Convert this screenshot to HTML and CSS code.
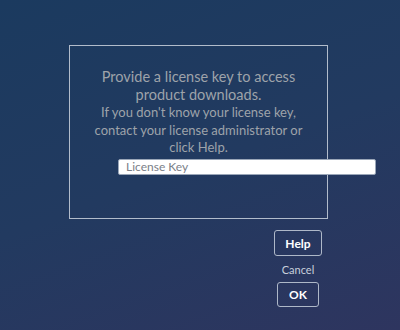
FILE: index.html
```html
<!DOCTYPE html>
<html lang="en">
<head>
  <meta charset="UTF-8" />
  <title>License Key</title>
  <link rel="stylesheet" href="styles.css">
</head>
<body>
  <main class="license">
    <section class="panel">
      <h2>Provide a license key to access product downloads.</h2>
      <p>If you don't know your license key, contact your license administrator or click Help.</p>
      <input type="text" class="key-input" placeholder="License Key" />
    </section>
    <div class="actions">
      <button class="btn">Help</button>
      <a href="#" class="cancel">Cancel</a>
      <button class="btn btn-ok">OK</button>
    </div>
  </main>
</body>
</html>
```
FILE: styles.css
```css
html, body {
  height: 100%;
}
body {
  margin: 0;
  font-family: Lato, 'Liberation Sans', sans-serif;
  background: linear-gradient(160deg, #1b3a5f 0%, #223a60 50%, #2e355f 100%);
  overflow: hidden;
}
.license {
  padding: 45px 0 0 69px;
}
.panel {
  box-sizing: border-box;
  width: 259px;
  height: 174px;
  border: 1.5px solid #b2bccb;
  padding-top: 22px;
  text-align: center;
  color: #9ea3aa;
}
.panel h2 {
  margin: 0 auto;
  width: 205px;
  font-size: 14.5px;
  font-weight: 400;
  line-height: 18px;
}
.panel p {
  margin: 0 auto;
  width: 214px;
  font-size: 13px;
  line-height: 17.5px;
}
.key-input {
  display: block;
  box-sizing: border-box;
  margin: 2px 0 0 48px;
  width: 258px;
  height: 16px;
  padding: 0 7px;
  border: 1px solid #9aa6b8;
  border-radius: 2px;
  background: #fff;
  font-family: Lato, 'Liberation Sans', sans-serif;
  font-size: 12px;
  outline: none;
}
.key-input::placeholder {
  color: #7b8088;
}
.actions {
  display: flex;
  flex-direction: column;
  align-items: center;
  width: 60px;
  margin: 11px 0 0 199px;
}
.btn {
  box-sizing: border-box;
  width: 48px;
  height: 26px;
  border: 1.5px solid #aeb8c8;
  border-radius: 3px;
  background: transparent;
  color: #fff;
  font-family: Lato, 'Liberation Sans', sans-serif;
  font-size: 12px;
  font-weight: 700;
  cursor: pointer;
}
.btn-ok {
  width: 42px;
  height: 25px;
}
.cancel {
  margin: 7px 0 6px;
  color: #c8d0dc;
  font-size: 11px;
  text-decoration: none;
}
```
